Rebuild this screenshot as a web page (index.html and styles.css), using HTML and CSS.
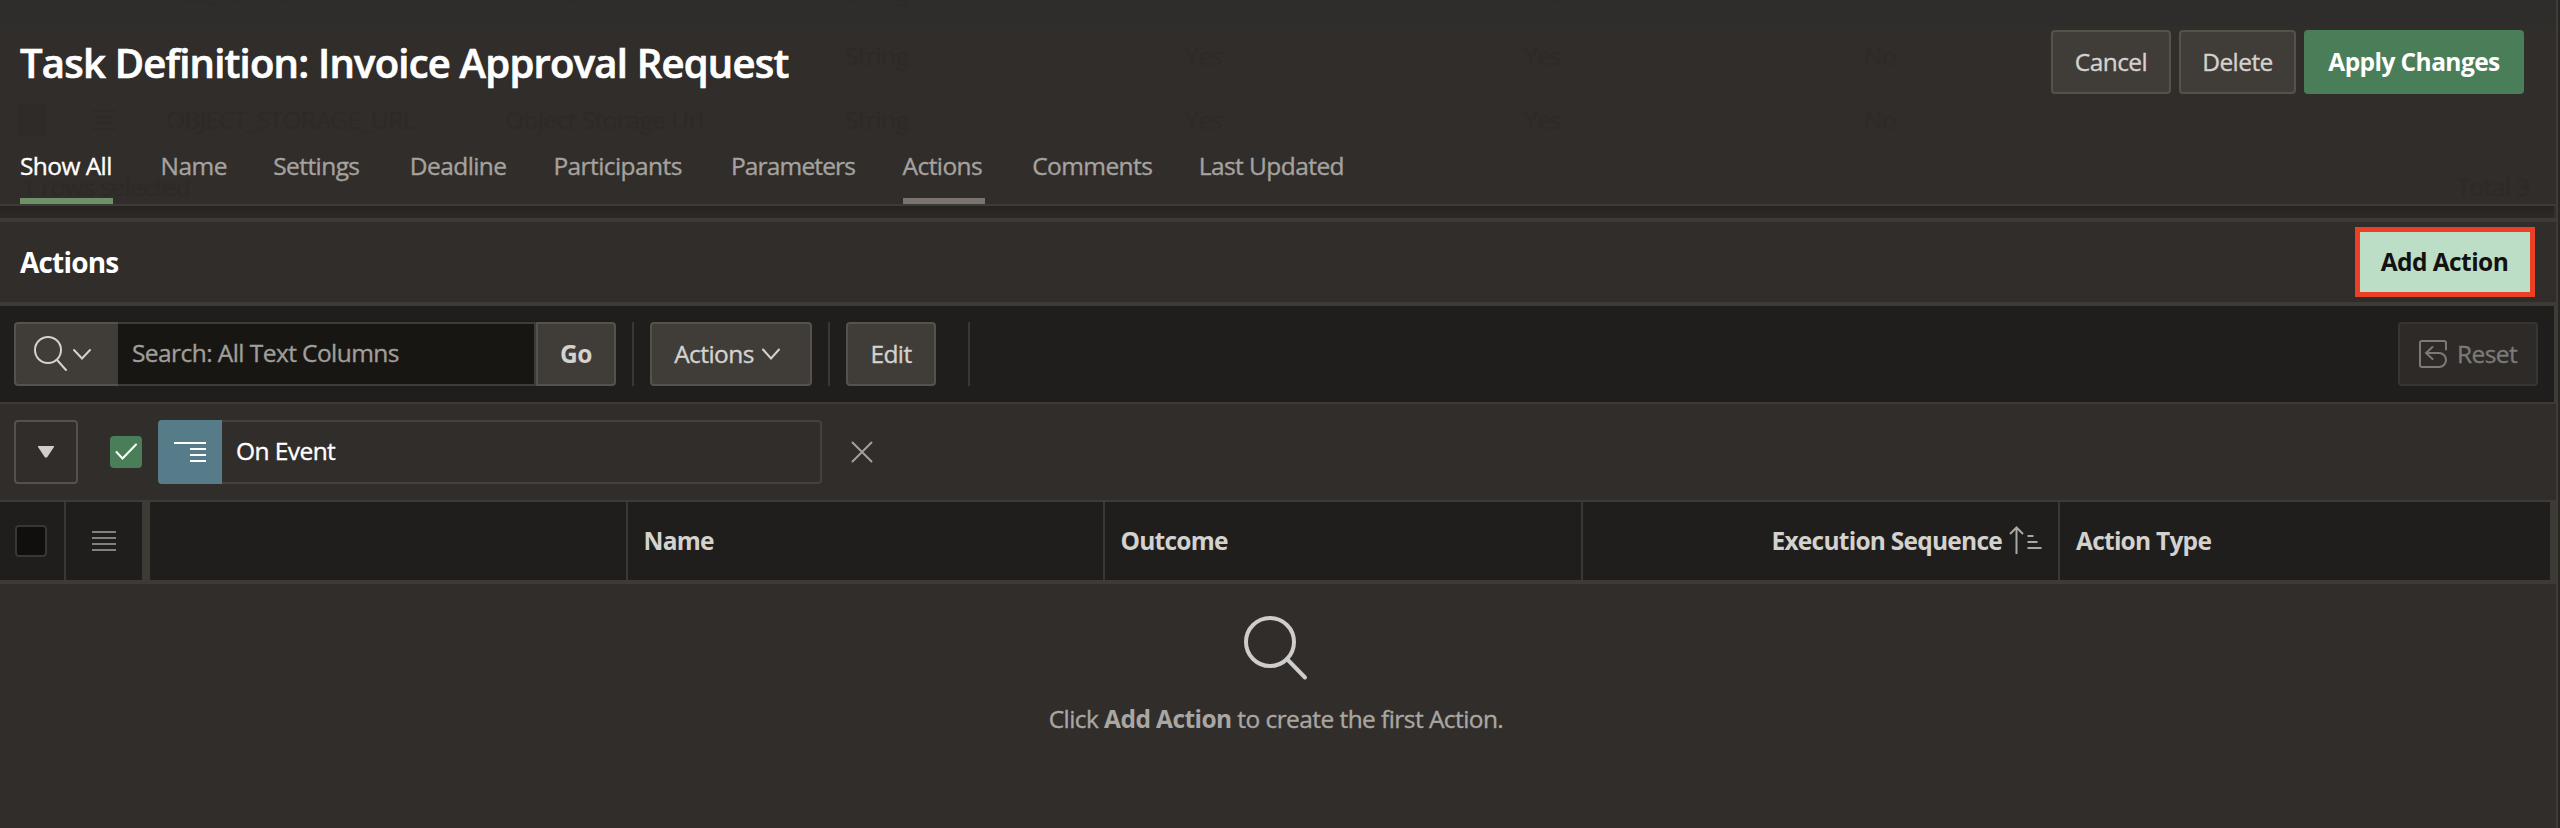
FILE: index.html
```
<!DOCTYPE html>
<html lang="en">
<head>
<meta charset="utf-8">
<title>Task Definition</title>
<link rel="stylesheet" href="styles.css">
</head>
<body>
<div class="page">
  <header class="header">
    <div class="underlay" aria-hidden="true">
      <div class="under-row first"><span></span><span>FILE_NAME</span><span>File Name</span><span>String</span><span>Yes</span><span>Yes</span><span>No</span></div>
      <div class="under-row"><span></span><span></span><span></span><span>String</span><span>Yes</span><span>Yes</span><span>No</span></div>
      <div class="under-row"><span class="under-icons"><i class="under-box"></i><svg width="24" height="22" viewBox="0 0 24 22"><path d="M0 2h24M0 8h24M0 14h24M0 20h24" stroke="currentColor" stroke-width="2"/></svg></span><span>OBJECT_STORAGE_URL</span><span>Object Storage Url</span><span>String</span><span>Yes</span><span>Yes</span><span>No</span></div>
      <div class="under-foot"><span>1 rows selected</span><span>Total 3</span></div>
    </div>
    <div class="title-row">
      <h1 class="title">Task Definition: Invoice Approval Request</h1>
      <div class="title-actions">
        <button class="btn cancel">Cancel</button>
        <button class="btn delete">Delete</button>
        <button class="btn apply">Apply Changes</button>
      </div>
    </div>
    <nav class="tabs">
      <a class="tab current">Show All</a>
      <a class="tab">Name</a>
      <a class="tab">Settings</a>
      <a class="tab">Deadline</a>
      <a class="tab">Participants</a>
      <a class="tab tight">Parameters</a>
      <a class="tab hover">Actions</a>
      <a class="tab">Comments</a>
      <a class="tab">Last Updated</a>
    </nav>
  </header>
  <div class="band"></div>
  <section class="region">
    <div class="region-head">
      <h2 class="region-title">Actions</h2>
      <button class="add">Add Action</button>
    </div>
    <div class="toolbar">
      <div class="search">
        <button class="search-menu">
          <svg width="66" height="44" viewBox="0 0 66 44" fill="none" stroke="#d4d2ce" stroke-width="2" stroke-linecap="round"><circle cx="16" cy="18" r="13"/><path d="M25.500 28.500L34 38M42 18l8 8.500 8-8.500"/></svg>
        </button>
        <div class="search-input">Search: All Text Columns</div>
        <button class="go">Go</button>
      </div>
      <i class="sep sep-a"></i>
      <button class="btn actions">Actions<svg width="18" height="13" viewBox="0 0 18 13" fill="none" stroke="currentColor" stroke-width="2" stroke-linecap="round"><path d="M1 1.500l8 9 8-9"/></svg></button>
      <i class="sep sep-b"></i>
      <button class="btn edit">Edit</button>
      <i class="sep sep-c"></i>
      <button class="btn reset"><svg width="28" height="28" viewBox="0 0 28 28" fill="none" stroke="currentColor" stroke-width="2" stroke-linecap="round"><path d="M27 9.500V3Q27 1 25 1H3Q1 1 1 3v22q0 2 2 2h17a7 7 0 0 0 0-14H7M13.500 7L7 13l6.500 6"/></svg>Reset</button>
    </div>
    <div class="filters">
      <button class="toggle"><svg width="16" height="12" viewBox="0 0 16 12"><path d="M0 0h16v1L9 11.500H7L0 1z" fill="#d0cecb"/></svg></button>
      <span class="check"><svg width="32" height="32" viewBox="0 0 32 32" fill="none" stroke="#fff" stroke-width="2" stroke-linecap="round" stroke-linejoin="miter"><path d="M6.500 16l6 6.500L26 8.500"/></svg></span>
      <div class="chip">
        <span class="chip-icon"><svg width="32" height="20" viewBox="0 0 32 20" stroke="#fff" stroke-width="2"><path d="M0 1h32M16 7h16M16 13h16M16 19h16"/></svg></span>
        <span class="chip-text">On Event</span>
      </div>
      <svg class="remove" width="22" height="22" viewBox="0 0 22 22" stroke="#a3a19d" stroke-width="2" stroke-linecap="round"><path d="M1.500 1.500l19 19M20.500 1.500l-19 19"/></svg>
    </div>
    <div class="grid-head">
      <div class="col-check"><span class="box"></span></div>
      <div class="col-menu"><svg width="24" height="20" viewBox="0 0 24 20" stroke="#83817e" stroke-width="2"><path d="M0 1h24M0 7h24M0 13h24M0 19h24"/></svg></div>
      <div class="col"></div>
      <div class="col">Name</div>
      <div class="col">Outcome</div>
      <div class="col right">Execution Sequence<svg width="34" height="30" viewBox="0 0 34 30" fill="none" stroke="#a9a7a4" stroke-width="2"><path d="M7.500 28V2M1 8l6.500-6.500L14 8M18.500 10h6M18.500 16h10M18.500 22h14"/></svg></div>
      <div class="col last">Action Type</div>
    </div>
    <div class="empty">
      <svg width="66" height="66" viewBox="0 0 66 66" fill="none" stroke="#cfcdcb" stroke-width="4" stroke-linecap="round"><circle cx="27" cy="27" r="24"/><path d="M44 44l18 18.500"/></svg>
      <p class="empty-text">Click <b>Add Action</b> to create the first Action.</p>
    </div>
  </section>
</div>
</body>
</html>
```

FILE: styles.css
```
* { box-sizing: border-box; }
body {
  margin: 0;
  width: 2560px;
  height: 828px;
  overflow: hidden;
  background: #292623;
  color: #d4d2ce;
  font: 400 24.5px/32px "Open Sans", "Noto Sans", sans-serif;
  letter-spacing: -0.57px;
  -webkit-text-stroke: 0.35px currentColor;
}
button {
  font: inherit;
  letter-spacing: inherit;
  color: inherit;
  margin: 0;
  padding: 0;
  flex: none;
}
svg { display: block; flex: none; }
h1, h2, p { margin: 0; }

.page {
  width: 2558px;
  height: 828px;
  border-right: 2px solid #3f3b37;
  background: #312d2a;
}

.header {
  position: relative;
  height: 206px;
  overflow: hidden;
  border-bottom: 2px solid #3e3a36;
  background: linear-gradient(#2e2d2b 0, #2e2d2b 22px, #312d2a 30px);
}
.underlay {
  position: absolute;
  inset: 0;
  padding: 0 26px 0 18px;
  color: #2e2a28;
}
.under-row {
  display: grid;
  grid-template-columns: 148px 339px 340px 340px 339px 340px 200px;
  height: 64px;
  align-items: center;
}
.under-row.first { margin-top: -40px; }
.under-icons { display: flex; gap: 46px; align-items: center; }
.under-box { width: 28px; height: 32px; border-radius: 4px; background: #2f2b28; }
.under-foot { display: flex; justify-content: space-between; padding: 19px 0 0 4px; }
.title-row {
  position: relative;
  display: flex;
  justify-content: space-between;
  align-items: flex-start;
  padding: 30px 32px 0 20px;
  height: 134px;
}
.title {
  padding-top: 7px;
  font-size: 40px;
  line-height: 52px;
  font-weight: 600;
  letter-spacing: -0.78px;
  color: #fff;
  -webkit-text-stroke: 0.7px currentColor;
}
.title-actions { display: flex; gap: 8px; }
.btn {
  display: flex;
  align-items: center;
  justify-content: center;
  height: 64px;
  border: 2px solid #55514b;
  border-radius: 4px;
  background: #403c38;
}
.cancel { width: 120px; }
.delete { width: 117px; }
.apply {
  width: 220px;
  border: 0;
  background: #4a7e58;
  color: #fff;
  font-weight: 700;
}

.tabs {
  position: relative;
  display: grid;
  grid-template-columns: 93px 65px 89px 96px 130px 124px 82px 119px 145px;
  column-gap: 47.6px;
  padding-left: 20px;
  color: #a5a29f;
}
.tab {
  height: 70px;
  padding-top: 16px;
  border-bottom: 6px solid transparent;
  white-space: nowrap;
}
.tab.current { color: #fff; border-color: #6f9167; }
.tab.hover { border-color: #7a736e; }
.tab.tight { letter-spacing: -0.85px; }

.band {
  height: 12px;
  border-right: 2px solid #34302d;
  background: linear-gradient(#262421, #2c2926);
}

.region { border-top: 4px solid #3e3a36; }
.region-head {
  display: flex;
  align-items: center;
  justify-content: space-between;
  height: 84px;
  padding: 0 21px 0 20px;
  border-bottom: 4px solid #3e3a36;
}
.region-title {
  font-size: 28px;
  font-weight: 700;
  letter-spacing: -0.8px;
  color: #fff;
}
.add {
  width: 180px;
  height: 70px;
  padding-right: 1px;
  border: 5px solid #ea4025;
  background: #bcdec7;
  color: #131210;
  font-weight: 700;
}

.toolbar {
  display: flex;
  align-items: center;
  height: 98px;
  padding: 0 16px 0 14px;
  border-right: 2px solid #3f3b37;
  border-bottom: 2px solid #3e3a36;
  background: #201e1c;
}
.search {
  display: flex;
  width: 602px;
  height: 64px;
}
.search-menu {
  width: 104px;
  padding: 0 0 0 16px;
  border: 2px solid #55514b;
  border-right: 0;
  border-radius: 4px 0 0 4px;
  background: #403c38;
}
.search-input {
  flex: 1;
  padding: 13px 14px 0;
  border: 2px solid #3f3b37;
  border-left: 0;
  background: #181613;
  color: #a09e99;
}
.go {
  width: 80px;
  border: 2px solid #55514b;
  border-radius: 0 4px 4px 0;
  background: #403c38;
  font-weight: 700;
}
.sep { width: 2px; height: 64px; background: #3b3834; }
.sep-a { margin: 0 16px; }
.actions { width: 162px; gap: 8px; padding-right: 8px; }
.sep-b { margin: 0 16px; }
.edit { width: 90px; }
.sep-c { margin-left: 32px; }
.reset {
  width: 140px;
  gap: 10px;
  margin-left: auto;
  border-color: #383431;
  background: #2e2a27;
  color: #7c7a77;
}

.filters {
  display: flex;
  align-items: center;
  height: 98px;
  padding-left: 14px;
  border-bottom: 2px solid #3e3a36;
}
.toggle {
  display: flex;
  align-items: center;
  justify-content: center;
  width: 64px;
  height: 64px;
  border: 2px solid #55514b;
  border-radius: 4px;
  background: none;
}
.check {
  width: 32px;
  height: 32px;
  margin: 0 16px 0 32px;
  border-radius: 4px;
  background: #4a7e58;
}
.chip {
  display: flex;
  width: 664px;
  height: 64px;
  border: 2px solid #45413d;
  border-left: 0;
  border-radius: 4px;
}
.chip-icon {
  display: flex;
  align-items: center;
  justify-content: center;
  width: 64px;
  height: 64px;
  margin-top: -2px;
  border-radius: 4px 0 0 4px;
  background: #557c88;
}
.chip-text { padding: 13px 0 0 14px; color: #fff; }
.remove { margin-left: 29px; }

.grid-head {
  display: grid;
  grid-template-columns: 66px 84px 478px 477px 478px 477px 1fr;
  height: 82px;
  border-right: 6px solid #3e3a36;
  border-bottom: 4px solid #3e3a36;
  background: #201e1c;
  font-weight: 700;
  letter-spacing: -0.75px;
}
.grid-head > div { display: flex; align-items: center; }
.col-check { padding-left: 15px; border-right: 2px solid #3b3834; }
.box {
  width: 32px;
  height: 32px;
  border: 2px solid #3a3633;
  border-radius: 4px;
  background: #100f0d;
}
.col-menu { padding-left: 26px; border-right: 8px solid #3e3a36; }
.col { padding: 0 16px 0 15.5px; border-right: 2px solid #3b3834; }
.col.right { justify-content: flex-end; gap: 7px; padding-right: 15px; }
.col.last { border-right: 0; padding-left: 16px; }
.apply, .add, .go, .grid-head, .region-title, b { -webkit-text-stroke: 0; }

.empty {
  display: flex;
  flex-direction: column;
  align-items: center;
  padding: 31px 4px 0 0;
}
.empty-text {
  margin-top: 22px;
  color: #a9a7a3;
}
```
